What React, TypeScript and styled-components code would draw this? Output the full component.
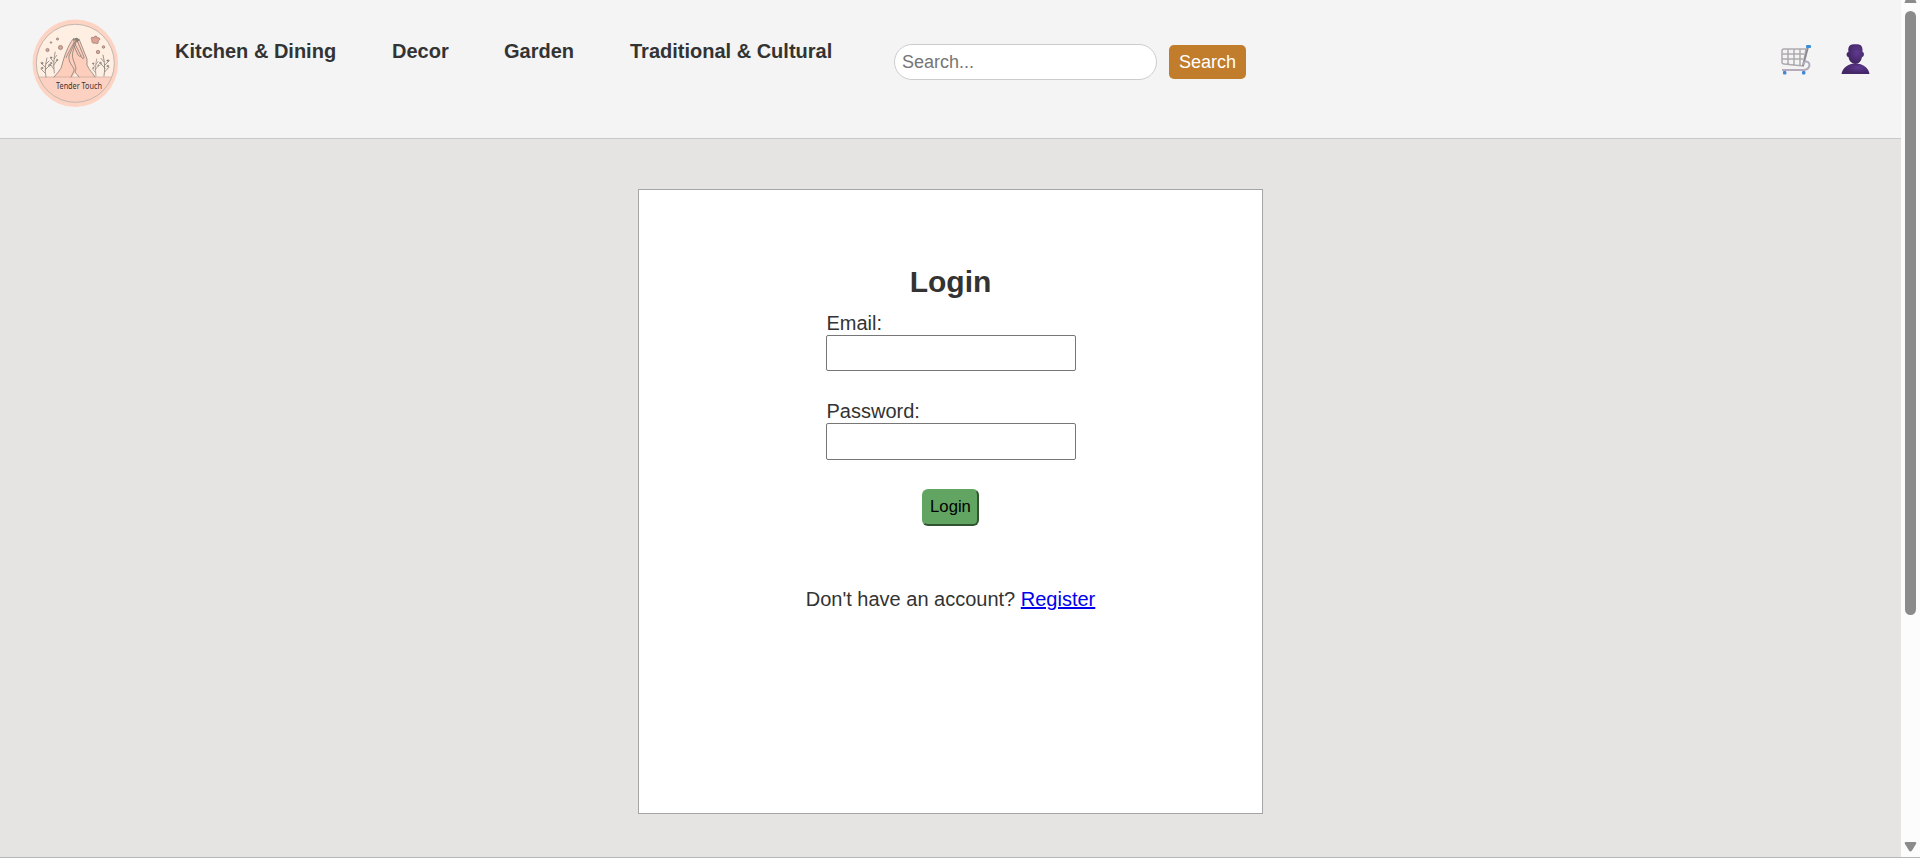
import React from "react";
import styled, { createGlobalStyle } from "styled-components";

const GlobalStyle = createGlobalStyle`
  *, *::before, *::after { box-sizing: border-box; }
  html, body { margin: 0; padding: 0; }
  body {
    overflow: hidden;
    background: #e5e4e2;
    color: #333;
    font: 20px/23px "Liberation Sans", Arial, sans-serif;
  }
`;

const Shell = styled.div`
  display: flex;
  height: 857px;
`;

const Frame = styled.div`
  height: 858px;
  border-bottom: 1px solid #b5b6b9;
  overflow: hidden;
`;

const Page = styled.div`
  flex: 1;
  display: flex;
  flex-direction: column;
  align-items: center;
`;

const Header = styled.header`
  display: flex;
  align-items: flex-start;
  width: 100%;
  height: 139px;
  padding: 19px 31px 0 32px;
  background: #f4f4f4;
  border-bottom: 1px solid #c8c8c8;
`;

const Nav = styled.nav`
  display: flex;
  gap: 56px;
  margin: 21px 0 0 56px;
`;

const NavLink = styled.a<{ $width: number }>`
  width: ${(p) => p.$width}px;
  color: #333;
  font-weight: bold;
  white-space: nowrap;
  text-decoration: none;
`;

const SearchForm = styled.form`
  display: flex;
  align-items: center;
  gap: 12px;
  margin: 25px 0 0 62px;
`;

const SearchInput = styled.input`
  width: 263px;
  height: 36px;
  padding: 0 7px;
  border: 1px solid #ccc;
  border-radius: 25px;
  background: #fff;
  font: 18px "Liberation Sans", Arial, sans-serif;
  &::placeholder { color: #757575; }
`;

const SearchButton = styled.button`
  width: 77px;
  height: 34px;
  padding: 0;
  border: 0;
  border-radius: 5px;
  background: #c17d2c;
  color: #fff;
  font: 18px "Liberation Sans", Arial, sans-serif;
`;

const Actions = styled.div`
  display: flex;
  gap: 30px;
  margin: 25px 0 0 auto;
`;

const Card = styled.main`
  display: flex;
  flex-direction: column;
  align-items: center;
  width: 625px;
  height: 625px;
  margin-top: 50px;
  padding-top: 75px;
  background: #fff;
  border: 1px solid #a5a5a5;
`;

const Title = styled.h2`
  margin: 0;
  font-size: 30px;
  line-height: 34px;
`;

const LoginForm = styled.form`
  display: flex;
  flex-direction: column;
  align-items: center;
  margin-top: 13px;
`;

const Field = styled.label`
  display: flex;
  flex-direction: column;
  width: 250px;
  margin-bottom: 29px;
`;

const FieldName = styled.span`
  padding-left: 1px;
`;

const TextInput = styled.input<{ $height: number }>`
  width: 250px;
  height: ${(p) => p.$height}px;
  border: 1px solid #767676;
  border-radius: 2px;
  background: #fff;
`;

const LoginButton = styled.button`
  width: 57px;
  height: 37px;
  padding: 0 0 1px;
  border: 2px solid;
  border-color: #62a562 #315331 #315331 #62a562;
  border-radius: 6px;
  background: #62a562;
  color: #000;
  font: 16.67px "Liberation Sans", Arial, sans-serif;
`;

const Prompt = styled.p`
  margin: 62px 0 0;
`;

const RegisterLink = styled.a`
  color: #0000ee;
`;

const ScrollTrack = styled.aside`
  display: flex;
  flex-direction: column;
  align-items: center;
  width: 19px;
  padding-bottom: 5px;
  background: #fcfcfc;
`;

const Thumb = styled.div`
  width: 11px;
  height: 604px;
  margin: 8px 0 auto;
  border-radius: 6px;
  background: #8b8b8b;
`;

const Sprig = () => (
  <g>
    <path d="M0 0C-1-6-1-12 1-19M-1-4l-4-4M-1-7l4-4M-1-10l-4-4M0-13l3-3" />
    <circle cx="-4" cy="-9" r=".8" />
    <circle cx="3.400" cy="-11.800" r=".8" />
    <circle cx="-4" cy="-14" r=".8" />
  </g>
);

const Logo = () => (
  <svg width="87" height="89" viewBox="0 0 87 89" aria-label="Tender Touch">
    <defs>
      <clipPath id="inner"><circle cx="43.300" cy="44.300" r="39" /></clipPath>
    </defs>
    <ellipse cx="43.300" cy="44.300" rx="42.800" ry="43.800" fill="#fdd3c3" />
    <circle cx="43.300" cy="44.300" r="39" fill="#feefe2" />
    <path d="M0 58h87v31H0z" fill="#fdd1c1" clipPath="url(#inner)" />
    <circle cx="43.300" cy="44.300" r="39" fill="none" stroke="#b3aba3" strokeWidth=".8" />
    <path d="M22 58c4-5 7-7 8-12 2-8 6-20 11.500-26.500l2.500 2.500 3-2 8 20v6c2 5 6 8 8 12z" fill="#fdcebb" />
    <path d="M40.500 58l3-5 3 5z" fill="#feefe2" />
    <g fill="none" stroke="#77716b" strokeWidth=".7" strokeLinecap="round">
      <path d="M7 58h72" stroke="#c5aaa0" />
      <path d="M22 58c4-5 7-7 8-12 2-8 6-20 11.500-26.500l.5 4-8 15M43 23l-6 14c-1 8 6 11 5 15l-3 6M44 22c-1 6-5 12-3 18s4 9 2 13l4 5M47 20l8 20v6c2 5 6 8 8 12M45 21l7 17c0 2-1 2-2 1l-7-14M49 37c-1 1-2 0-3-1l-4-9" />
      <path d="M42 20l3-1 2 2-2 2z" fill="#8b8176" />
      <g transform="translate(14 58)"><Sprig /></g>
      <g transform="translate(22.300 54) scale(.8 1.100)"><Sprig /></g>
      <g transform="translate(64 57) scale(.7 .9)"><Sprig /></g>
      <g transform="translate(72 57) scale(-1 1.100)"><Sprig /></g>
    </g>
    <g fill="#dfa295" stroke="#7a6a63" strokeWidth=".6">
      <circle cx="15.500" cy="31" r="1.600" />
      <circle cx="19" cy="23.500" r=".8" />
      <circle cx="25.500" cy="20" r="1.100" />
      <circle cx="28.500" cy="28.500" r="2.100" />
      <path d="M60 21c-2-2 0-4 2-2 0-3 4-2 3 0 3-1 4 2 1 3 1 3-1 3-3 2-2 1-4-1-3-3z" />
      <circle cx="66" cy="33" r="1.700" />
      <circle cx="71.500" cy="28" r="1.300" />
    </g>
    <text x="24" y="70" fill="#3b3432" fontFamily="'Noto Sans', sans-serif" fontSize="8" textLength="46" lengthAdjust="spacingAndGlyphs">Tender Touch</text>
  </svg>
);

const CartIcon = () => (
  <svg width="30" height="31" viewBox="0 0 30 31" fill="none">
    <path d="M25 5H3Q1 5 1 7v11q0 2 2 2l19 2zM1 10h22M1 15h21M7 5v15M13 5v16M19 5v16" stroke="#aeaaaf" strokeWidth="1.500" />
    <path d="M27 3 22 22" stroke="#8e8994" strokeWidth="1.900" />
    <path d="M1 26h21c8 0 8-8.500 3-8.500-2 0-2 2-3 3" stroke="#b6abbd" strokeWidth="2" />
    <rect x="25" y="1" width="5" height="3" rx="1" fill="#3b8edb" />
    <rect x="2" y="27" width="3.400" height="3.500" rx="1" fill="#4187d3" />
    <rect x="21" y="27" width="3.400" height="3.500" rx="1" fill="#4187d3" />
  </svg>
);

const UserIcon = () => (
  <svg width="29" height="31" viewBox="0 0 29 31">
    <defs>
      <radialGradient id="skin" cx="60%" cy="40%">
        <stop stopColor="#603b91" />
        <stop offset="1" stopColor="#452768" />
      </radialGradient>
    </defs>
    <path d="M7.500 8C6.500 2 9 .3 14.500.3S22 2 21.500 8c2 0 2 5-.5 5-.8 4-3 7-6.500 7S8 17 7.500 13C5 13 5 8 7.500 8z" fill="url(#skin)" />
    <path d="M.5 30C1.500 24 7 19.500 14.500 19.500S27.500 24 28.500 30z" fill="url(#skin)" />
    <path d="M8.500 6c4-1 8-1 12 0" stroke="#4c2b73" strokeWidth=".5" fill="none" />
  </svg>
);

const ScrollArrow = ({ up }: { up?: boolean }) =>
  up ? (
    <svg width="13" height="3"><path d="M1.500 0h10l1 3H.5z" fill="#8b8b8b" /></svg>
  ) : (
    <svg width="13" height="10"><path d="M2 0h9q2 0 1 2L8 8.500q-1.500 2-3 0L1 2Q0 0 2 0z" fill="#8b8b8b" /></svg>
  );

const links = [
  { label: "Kitchen & Dining", width: 161 },
  { label: "Decor", width: 56 },
  { label: "Garden", width: 70 },
  { label: "Traditional & Cultural", width: 202 },
];

export default function App() {
  return (
    <Frame>
      <GlobalStyle />
      <Shell>
        <Page>
          <Header>
            <Logo />
            <Nav>
              {links.map((l) => (
                <NavLink key={l.label} $width={l.width}>{l.label}</NavLink>
              ))}
            </Nav>
            <SearchForm>
              <SearchInput placeholder="Search..." />
              <SearchButton type="button">Search</SearchButton>
            </SearchForm>
            <Actions>
              <CartIcon />
              <UserIcon />
            </Actions>
          </Header>
          <Card>
            <Title>Login</Title>
            <LoginForm>
              <Field>
                <FieldName>Email:</FieldName>
                <TextInput type="email" $height={36} />
              </Field>
              <Field>
                <FieldName>Password:</FieldName>
                <TextInput type="password" $height={37} />
              </Field>
              <LoginButton type="button">Login</LoginButton>
            </LoginForm>
            <Prompt>
              Don't have an account? <RegisterLink href="#">Register</RegisterLink>
            </Prompt>
          </Card>
        </Page>
        <ScrollTrack>
          <ScrollArrow up />
          <Thumb />
          <ScrollArrow />
        </ScrollTrack>
      </Shell>
    </Frame>
  );
}
